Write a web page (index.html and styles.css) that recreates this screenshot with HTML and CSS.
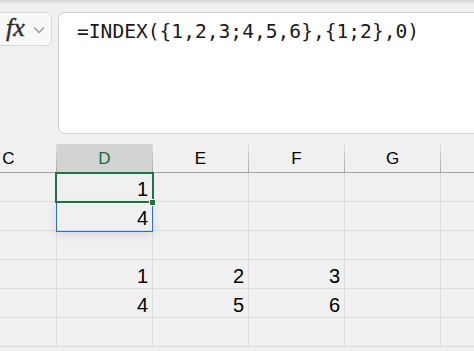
FILE: index.html
```html
<!DOCTYPE html>
<html lang="en">
<head>
    <meta charset="UTF-8">
    <title>Formula bar</title>
    <link rel="stylesheet" href="styles.css">
</head>
<body>
    <div class="top-strip"></div>

    <div class="formula-bar">
        <div class="fx-box">
            <span class="fx">fx</span>
            <svg class="chevron" width="12" height="8" viewBox="0 0 12 8">
                <polyline points="1,1.5 6,6.5 11,1.5" fill="none" stroke="#9a9a9a" stroke-width="1.3"/>
            </svg>
        </div>
        <div class="formula-input">=INDEX({1,2,3;4,5,6},{1;2},0)</div>
    </div>

    <div class="sheet">
        <div class="col-headers">
            <div class="col-head">C</div>
            <div class="col-head active">D</div>
            <div class="col-head">E</div>
            <div class="col-head">F</div>
            <div class="col-head">G</div>
            <div class="col-head"></div>
        </div>

        <div class="grid">
            <!-- row 1 -->
            <div class="cell"></div><div class="cell">1</div><div class="cell"></div><div class="cell"></div><div class="cell"></div><div class="cell"></div>
            <!-- row 2 -->
            <div class="cell"></div><div class="cell">4</div><div class="cell"></div><div class="cell"></div><div class="cell"></div><div class="cell"></div>
            <!-- row 3 -->
            <div class="cell"></div><div class="cell"></div><div class="cell"></div><div class="cell"></div><div class="cell"></div><div class="cell"></div>
            <!-- row 4 -->
            <div class="cell"></div><div class="cell">1</div><div class="cell">2</div><div class="cell">3</div><div class="cell"></div><div class="cell"></div>
            <!-- row 5 -->
            <div class="cell"></div><div class="cell">4</div><div class="cell">5</div><div class="cell">6</div><div class="cell"></div><div class="cell"></div>
            <!-- row 6 -->
            <div class="cell"></div><div class="cell"></div><div class="cell"></div><div class="cell"></div><div class="cell"></div><div class="cell"></div>

            <div class="spill-range"></div>
            <div class="active-cell"><span class="fill-handle"></span></div>
        </div>
    </div>
</body>
</html>
```

FILE: styles.css
```css
body {
    margin: 0;
    background: #f0f0f0;
    font-family: 'Liberation Sans', Arial, sans-serif;
    color: #000;
    overflow: hidden;
    width: 474px;
    height: 351px;
}

.top-strip {
    height: 4px;
    background: linear-gradient(#d6d6d6, #ececec);
}

.formula-bar {
    display: flex;
    align-items: flex-start;
    padding-top: 8px;
    margin-left: -10px;
    margin-right: -20px;
}

.fx-box {
    width: 45px;
    height: 32px;
    background: #f8f8f8;
    border: 1px solid #d8d8d8;
    border-radius: 6px;
    display: flex;
    align-items: center;
    padding-left: 15px;
}

.fx {
    font-family: 'Liberation Serif', 'Times New Roman', serif;
    font-style: italic;
    font-size: 26px;
    color: #2e2e2e;
    margin-top: -3px;
    -webkit-text-stroke: 0.4px #2e2e2e;
}

.chevron {
    margin-left: 8px;
    margin-top: 1px;
}

.formula-input {
    flex: 1;
    height: 122px;
    margin-left: 6px;
    background: #fff;
    border: 1px solid #d0d0d0;
    border-radius: 7px;
    padding: 7px 0 0 18px;
    box-sizing: border-box;
    font-family: 'DejaVu Sans Mono', 'Liberation Mono', monospace;
    font-size: 19.6px;
    line-height: 24px;
    color: #1a1a1a;
}

.sheet {
    margin-top: 10px;
    margin-left: -39px;
}

.col-headers {
    display: grid;
    grid-template-columns: repeat(6, 96px);
    height: 28px;
    border-bottom: 1px solid #a3a3a3;
}

.col-head {
    display: flex;
    align-items: center;
    justify-content: center;
    font-size: 17px;
    padding-top: 2px;
    box-sizing: border-box;
    border-right: 1px solid;
    border-image: linear-gradient(#e4e4e4, #a6a6a6) 1;
}

.col-head.active {
    background: #d3d3d3;
    color: #1d6b3f;
}

.grid {
    position: relative;
    display: grid;
    grid-template-columns: repeat(6, 96px);
    grid-auto-rows: 29px;
}

.cell {
    border-right: 1px solid #dcdcdc;
    border-bottom: 1px solid #dcdcdc;
    display: flex;
    align-items: flex-end;
    justify-content: flex-end;
    padding-right: 4px;
    font-size: 20px;
    line-height: 23px;
    box-sizing: border-box;
}

.spill-range {
    position: absolute;
    left: 95px;
    top: 29px;
    width: 97px;
    height: 30px;
    border: 1px solid #2c6cd4;
    box-sizing: border-box;
    box-shadow: 0 3px 10px rgba(0, 0, 0, 0.1);
}

.active-cell {
    position: absolute;
    left: 94px;
    top: -1px;
    width: 99px;
    height: 31px;
    border: 2px solid #1f7244;
    box-sizing: border-box;
}

.fill-handle {
    position: absolute;
    right: -4px;
    bottom: -5px;
    width: 5px;
    height: 5px;
    background: #1f7244;
    border: 1px solid #fff;
}
```
